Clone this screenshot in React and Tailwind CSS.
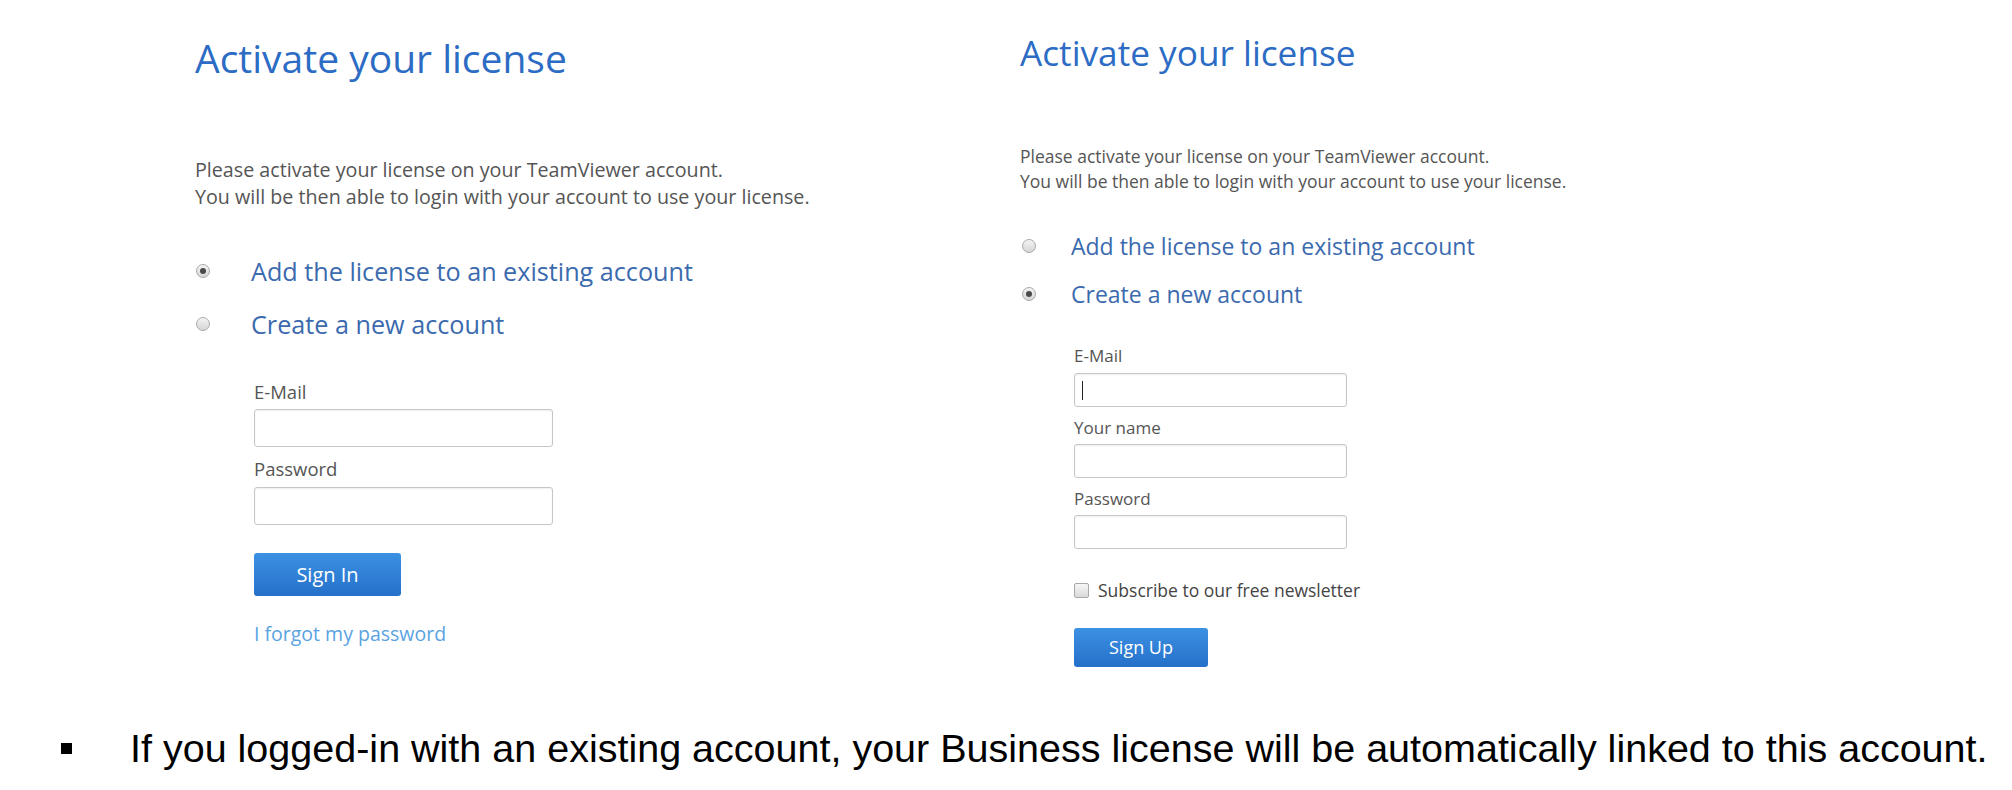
import React from "react";

function Radio({ checked, size = "w-[14px] h-[14px]" }) {
  return (
    <span
      className={`${size} shrink-0 rounded-full border border-[#a9a9a9] bg-gradient-to-b from-[#f4f4f4] to-[#d6d6d6] flex items-center justify-center`}
    >
      {checked && <span className="w-[6px] h-[6px] rounded-full bg-[#4a4a4a]" />}
    </span>
  );
}

function Field({ label, labelClass, inputClass, gapClass, caret }) {
  return (
    <div className="flex flex-col">
      <span className={`text-[#555] ${labelClass}`}>{label}</span>
      <div
        className={`relative bg-white border border-[#c6c6c6] rounded-[3px] shadow-[inset_0_1px_2px_rgba(0,0,0,0.07)] ${inputClass} ${gapClass}`}
      >
        {caret && <span className="absolute left-[7px] top-[7px] w-[1px] h-[19px] bg-[#222]" />}
      </div>
    </div>
  );
}

function LeftPanel() {
  return (
    <section className="w-[1020px] pl-[195px] pt-[36px]">
      <h1 className="text-[39px] leading-[44px] text-[#2c6cc4]">Activate your license</h1>
      <p className="mt-[76px] text-[19.7px] leading-[27px] text-[#555]">
        Please activate your license on your TeamViewer account.
        <br />
        You will be then able to login with your account to use your license.
      </p>

      <div className="mt-[44px] flex flex-col gap-[19px]">
        <div className="flex items-center h-[34px] pl-[1px]">
          <Radio checked />
          <span className="ml-[41px] text-[25.2px] leading-[34px] text-[#3b6aae]">
            Add the license to an existing account
          </span>
        </div>
        <div className="flex items-center h-[34px] pl-[1px]">
          <Radio />
          <span className="ml-[41px] text-[25.2px] leading-[34px] text-[#3b6aae]">Create a new account</span>
        </div>
      </div>

      <div className="ml-[59px] mt-[39px] flex flex-col">
        <Field label="E-Mail" labelClass="text-[18.5px] leading-[24px]" inputClass="w-[299px] h-[38px]" gapClass="mt-[5px]" />
        <div className="mt-[10px]">
          <Field label="Password" labelClass="text-[18.5px] leading-[24px]" inputClass="w-[299px] h-[38px]" gapClass="mt-[6px]" />
        </div>
        <button className="mt-[28px] w-[147px] h-[43px] rounded-[3px] bg-gradient-to-b from-[#3c91e3] to-[#2570ca] text-white text-[20px] leading-[43px]">
          Sign In
        </button>
        <a className="mt-[25px] text-[19.5px] leading-[26px] text-[#5aa3e2]">I forgot my password</a>
      </div>
    </section>
  );
}

function RightPanel() {
  return (
    <section className="flex-1 pt-[32px]">
      <h1 className="text-[35.2px] leading-[40px] text-[#2c6cc4]">Activate your license</h1>
      <p className="mt-[72px] text-[17.5px] leading-[25px] text-[#555]">
        Please activate your license on your TeamViewer account.
        <br />
        You will be then able to login with your account to use your license.
      </p>

      <div className="mt-[37px] flex flex-col gap-[18px]">
        <div className="flex items-center h-[30px] pl-[2px]">
          <Radio />
          <span className="ml-[35px] text-[23px] leading-[30px] text-[#3b6aae]">
            Add the license to an existing account
          </span>
        </div>
        <div className="flex items-center h-[30px] pl-[2px]">
          <Radio checked />
          <span className="ml-[35px] text-[23px] leading-[30px] text-[#3b6aae]">Create a new account</span>
        </div>
      </div>

      <div className="ml-[54px] mt-[36px] flex flex-col">
        <Field label="E-Mail" labelClass="text-[17px] leading-[22px]" inputClass="w-[273px] h-[34px]" gapClass="mt-[6px]" caret />
        <div className="mt-[10px]">
          <Field label="Your name" labelClass="text-[17px] leading-[22px]" inputClass="w-[273px] h-[34px]" gapClass="mt-[5px]" />
        </div>
        <div className="mt-[10px]">
          <Field label="Password" labelClass="text-[17px] leading-[22px]" inputClass="w-[273px] h-[34px]" gapClass="mt-[5px]" />
        </div>
        <label className="mt-[30px] flex items-center h-[22px]">
          <span className="w-[15px] h-[15px] rounded-[2px] border border-[#a9a9a9] bg-gradient-to-b from-[#f6f6f6] to-[#dadada]" />
          <span className="ml-[9px] text-[17.5px] leading-[22px] text-[#444]">Subscribe to our free newsletter</span>
        </label>
        <button className="mt-[27px] w-[134px] h-[39px] rounded-[3px] bg-gradient-to-b from-[#3c91e3] to-[#2570ca] text-white text-[18px] leading-[39px]">
          Sign Up
        </button>
      </div>
    </section>
  );
}

export default function App() {
  return (
    <div className="w-[2012px] h-[790px] bg-white overflow-hidden font-['Open_Sans',sans-serif]">
      <div className="flex h-[726px]">
        <LeftPanel />
        <RightPanel />
      </div>
      <div className="flex items-center h-[44px] pl-[61px] font-['Liberation_Sans',Arial,sans-serif] text-black">
        <span className="w-[11px] h-[11px] bg-black shrink-0" />
        <span className="ml-[58px] text-[39.5px] leading-[44px] whitespace-nowrap">
          If you logged-in with an existing account, your Business license will be automatically linked to this account.
        </span>
      </div>
    </div>
  );
}
